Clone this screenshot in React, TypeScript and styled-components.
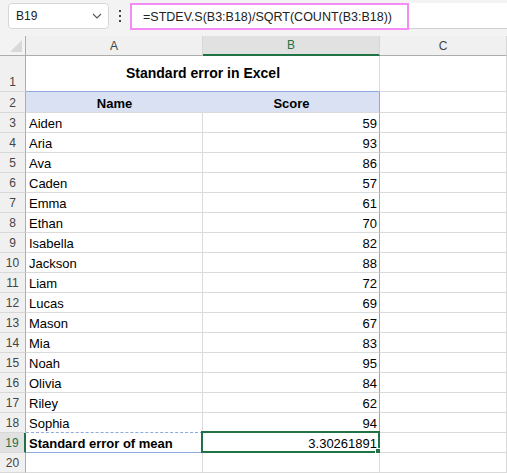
import { FC } from 'react';
import styled, { createGlobalStyle } from 'styled-components';

type Score = {
  name: string;
  score: number;
};

const GREEN = '#217346';
const GRID = '#dadada';
const HEAD_LINE = '#adadad';
const TABLE_BLUE = '#8ea9db';
const TABLE_FILL = '#d9e1f2';

const scores: Score[] = [
  { name: 'Aiden', score: 59 },
  { name: 'Aria', score: 93 },
  { name: 'Ava', score: 86 },
  { name: 'Caden', score: 57 },
  { name: 'Emma', score: 61 },
  { name: 'Ethan', score: 70 },
  { name: 'Isabella', score: 82 },
  { name: 'Jackson', score: 88 },
  { name: 'Liam', score: 72 },
  { name: 'Lucas', score: 69 },
  { name: 'Mason', score: 67 },
  { name: 'Mia', score: 83 },
  { name: 'Noah', score: 95 },
  { name: 'Olivia', score: 84 },
  { name: 'Riley', score: 62 },
  { name: 'Sophia', score: 94 }
];

const GlobalStyle = createGlobalStyle`
  body {
    margin: 0;
    background: #f3f3f3;
    font-family: 'Liberation Sans', Arial, sans-serif;
  }
`;

const Root = styled.div`
  width: 100%;
  height: 473px;
  overflow: hidden;
  background: #f3f3f3;
`;

// 上部の名前ボックス＋数式バー
const FormulaBar = styled.div`
  display: flex;
  align-items: flex-start;
  height: 36px;
  padding-top: 3px;
  box-sizing: border-box;
`;

const NameBox = styled.div`
  margin-left: 8px;
  width: 101px;
  height: 26px;
  box-sizing: border-box;
  background: #fff;
  border: 1px solid #d6d6d6;
  border-radius: 4px;
  display: flex;
  align-items: center;
  justify-content: space-between;
  padding: 0 6px 0 7px;
  font-size: 12px;
  color: #222;
`;

const MoreDots = styled.div`
  width: 21px;
  height: 26px;
  display: flex;
  flex-direction: column;
  align-items: center;
  justify-content: center;
  gap: 3px;

  span {
    width: 2px;
    height: 2px;
    background: #444;
  }
`;

const FormulaField = styled.div`
  flex: 1;
  height: 26px;
  box-sizing: border-box;
  background: #fff;
  border-bottom: 1px solid #d0d0d0;
  display: flex;
`;

const FormulaHighlight = styled.div`
  width: 279px;
  height: 27px;
  box-sizing: border-box;
  border: 2px solid #f58cf5;
  display: flex;
  align-items: center;
  padding-left: 11px;
  font-size: 12.5px;
  color: #222;
  white-space: nowrap;
`;

// シート本体
const Sheet = styled.div`
  display: grid;
  grid-template-columns: 26px 177px 177px 1fr;
  grid-template-rows: 20px 36px 21px repeat(18, 20px);
  background: #fff;
`;

const Corner = styled.div`
  box-sizing: border-box;
  background: #f3f3f3;
  border-right: 1px solid ${HEAD_LINE};
  border-bottom: 1px solid ${HEAD_LINE};
  display: flex;
  align-items: flex-end;
  justify-content: flex-end;
  padding: 0 3px 3px 0;
`;

const CornerTriangle = styled.div`
  width: 0;
  height: 0;
  border-left: 12px solid transparent;
  border-bottom: 12px solid #d8d8d8;
`;

const ColHead = styled.div<{ $active?: boolean }>`
  box-sizing: border-box;
  display: flex;
  align-items: center;
  justify-content: center;
  font-size: 12px;
  background: ${p => (p.$active ? '#e1e1e1' : '#f0f0f0')};
  color: ${p => (p.$active ? GREEN : '#444')};
  border-right: 1px solid #d6d6d6;
  border-bottom: ${p => (p.$active ? `2px solid ${GREEN}` : `1px solid ${HEAD_LINE}`)};
`;

const RowHead = styled.div<{ $active?: boolean }>`
  box-sizing: border-box;
  display: flex;
  align-items: flex-end;
  justify-content: center;
  padding-bottom: 2px;
  font-size: 12px;
  line-height: 14px;
  background: ${p => (p.$active ? '#e1e1e1' : '#f0f0f0')};
  color: ${p => (p.$active ? GREEN : '#444')};
  border-bottom: 1px solid #d8d8d8;
  border-right: ${p => (p.$active ? `2px solid ${GREEN}` : `1px solid ${HEAD_LINE}`)};
`;

type CellProps = {
  $align?: 'left' | 'center' | 'right';
  $bold?: boolean;
  $fill?: string;
  $right?: string;
  $bottom?: string;
};

const Cell = styled.div<CellProps>`
  position: relative;
  box-sizing: border-box;
  display: flex;
  align-items: flex-end;
  justify-content: ${p => (p.$align === 'right' ? 'flex-end' : p.$align === 'center' ? 'center' : 'flex-start')};
  padding: 0 2px 1px 3px;
  font-size: 13px;
  line-height: 15px;
  font-weight: ${p => (p.$bold ? 700 : 400)};
  color: #000;
  white-space: nowrap;
  background: ${p => p.$fill || '#fff'};
  border-right: ${p => p.$right || `1px solid ${GRID}`};
  border-bottom: ${p => p.$bottom || `1px solid ${GRID}`};
`;

// A1:B1 結合のタイトル
const TitleCell = styled(Cell)`
  grid-column: span 2;
  align-items: center;
  justify-content: center;
  font-size: 14px;
  padding-bottom: 0;
`;

// 選択中セルの枠とフィルハンドル
const Selection = styled.div`
  position: absolute;
  top: -2px;
  left: -2px;
  right: -1px;
  bottom: -1px;
  border: 2px solid ${GREEN};
  pointer-events: none;
`;

const FillHandle = styled.div`
  position: absolute;
  right: -4px;
  bottom: -4px;
  width: 5px;
  height: 5px;
  background: ${GREEN};
  border: 1px solid #fff;
`;

const tableRight = `1px solid ${TABLE_BLUE}`;

const Chevron: FC = () => (
  <svg width="10" height="6" viewBox="0 0 10 6">
    <path d="M1 1 L5 5 L9 1" fill="none" stroke="#555" strokeWidth="1.1" />
  </svg>
);

const App: FC = () => {
  return (
    <Root>
      <GlobalStyle />
      <FormulaBar>
        <NameBox>
          <span>B19</span>
          <Chevron />
        </NameBox>
        <MoreDots>
          <span />
          <span />
          <span />
        </MoreDots>
        <FormulaField>
          <FormulaHighlight>=STDEV.S(B3:B18)/SQRT(COUNT(B3:B18))</FormulaHighlight>
        </FormulaField>
      </FormulaBar>

      <Sheet>
        <Corner>
          <CornerTriangle />
        </Corner>
        <ColHead>A</ColHead>
        <ColHead $active>B</ColHead>
        <ColHead>C</ColHead>

        <RowHead>1</RowHead>
        <TitleCell $bold $bottom={tableRight}>
          Standard error in Excel
        </TitleCell>
        <Cell />

        <RowHead>2</RowHead>
        <Cell $bold $align="center" $fill={TABLE_FILL} $right={`1px solid ${TABLE_FILL}`}>
          Name
        </Cell>
        <Cell $bold $align="center" $fill={TABLE_FILL} $right={tableRight}>
          Score
        </Cell>
        <Cell />

        {scores.map((item, key) => (
          <Row key={item.name} index={key + 3} item={item} last={key === scores.length - 1} />
        ))}

        <RowHead $active>19</RowHead>
        <Cell $bold $bottom={tableRight}>
          Standard error of mean
        </Cell>
        <Cell $align="right" $right={tableRight}>
          3.30261891
          <Selection>
            <FillHandle />
          </Selection>
        </Cell>
        <Cell />

        <RowHead>20</RowHead>
        <Cell />
        <Cell />
        <Cell />
      </Sheet>
    </Root>
  );
};

const Row: FC<{ index: number; item: Score; last: boolean }> = props => {
  const { index, item, last } = props;
  return (
    <>
      <RowHead>{index}</RowHead>
      <Cell $bottom={last ? `1px dashed ${TABLE_BLUE}` : undefined}>{item.name}</Cell>
      <Cell $align="right" $right={tableRight}>
        {item.score}
      </Cell>
      <Cell />
    </>
  );
};

export default App;
